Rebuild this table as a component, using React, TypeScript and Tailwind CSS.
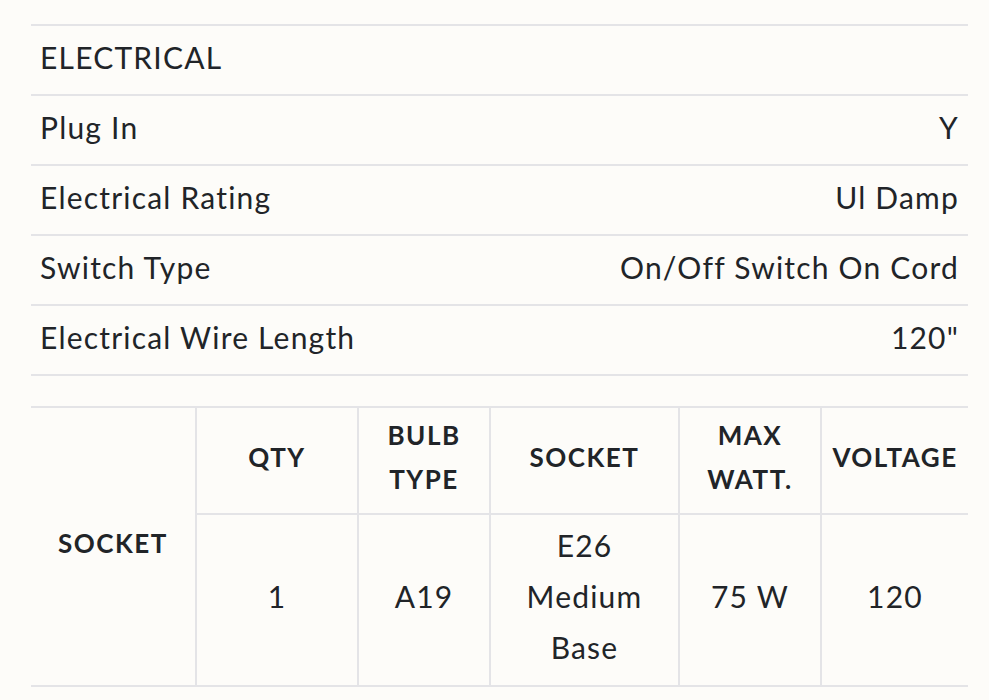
import React from "react";

const rows: [string, string][] = [
  ["Plug In", "Y"],
  ["Electrical Rating", "Ul Damp"],
  ["Switch Type", "On/Off Switch On Cord"],
  ["Electrical Wire Length", "120\""],
];

const th =
  "font-bold text-[26px] leading-[44px] tracking-[1.5px] pb-[8px] border-l-2 border-b-2 border-[#e4e4e7]";
const td = "text-[30px] leading-[51px] tracking-[1.2px] pb-[8px] border-l-2 border-[#e4e4e7]";

export default function App() {
  return (
    <div
      className="min-h-[700px] w-[989px] bg-[#fdfcf9] text-[#212428] pt-[24px] pl-[31px]"
      style={{ fontFamily: "Lato, 'Noto Sans', sans-serif" }}
    >
      <div className="w-[937px]">
        <div className="h-[70px] border-t-2 border-[#e4e4e7] flex items-center px-[9px] pb-[6px] text-[30px] tracking-[1.2px]">
          ELECTRICAL
        </div>
        {rows.map(([k, v]) => (
          <div
            key={k}
            className="h-[70px] border-t-2 border-[#e4e4e7] flex items-center justify-between px-[9px] pb-[6px] text-[30px] tracking-[1.2px]"
          >
            <span>{k}</span>
            <span>{v}</span>
          </div>
        ))}
        <div className="border-t-2 border-[#e4e4e7]" />

        <table className="mt-[30px] w-[937px] border-collapse text-center">
          <colgroup>
            <col className="w-[165px]" />
            <col className="w-[162px]" />
            <col className="w-[132px]" />
            <col className="w-[189px]" />
            <col className="w-[142px]" />
            <col className="w-[147px]" />
          </colgroup>
          <tbody>
            <tr className="h-[107px] border-t-2 border-[#e4e4e7]">
              <td
                rowSpan={2}
                className="font-bold text-[26px] leading-[44px] tracking-[1.5px] pb-[8px] border-b-2 border-[#e4e4e7]"
              >
                SOCKET
              </td>
              <td className={th}>QTY</td>
              <td className={th}>
                BULB
                <br />
                TYPE
              </td>
              <td className={th}>SOCKET</td>
              <td className={th}>
                MAX
                <br />
                WATT.
              </td>
              <td className={th}>VOLTAGE</td>
            </tr>
            <tr className="h-[172px] border-b-2 border-[#e4e4e7]">
              <td className={td}>1</td>
              <td className={td}>A19</td>
              <td className={td}>
                E26
                <br />
                Medium
                <br />
                Base
              </td>
              <td className={td}>75 W</td>
              <td className={td}>120</td>
            </tr>
          </tbody>
        </table>
      </div>
    </div>
  );
}
